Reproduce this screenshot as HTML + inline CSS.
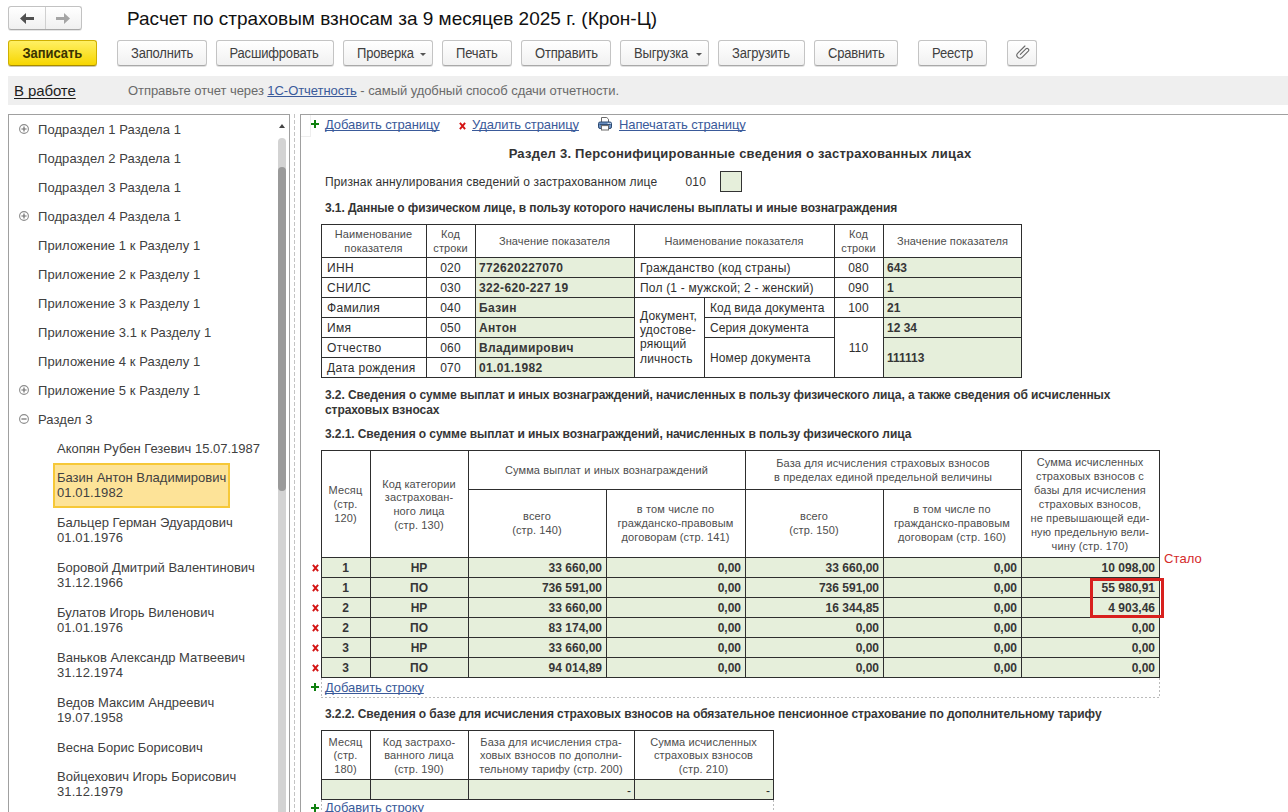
<!DOCTYPE html>
<html><head><meta charset="utf-8"><style>
html,body{margin:0;padding:0;width:1288px;height:812px;overflow:hidden;background:#fff;}
body{position:relative;font-family:"Liberation Sans", sans-serif;}
.t{position:absolute;white-space:nowrap;}
.r{position:absolute;box-sizing:border-box;}
.btn{position:absolute;box-sizing:border-box;height:26px;top:40px;border:1px solid #c4c4c4;border-bottom-color:#a9a9a9;border-radius:3px;background:linear-gradient(#ffffff,#f1f1f1);box-shadow:0 1px 0 rgba(0,0,0,0.12);font-size:13px;color:#404040;text-align:center;line-height:24px;white-space:nowrap;}
a,.lnk{color:#3a5a9a;text-decoration:underline;}
.t{text-decoration-skip-ink:none;}
</style></head><body>
<div class="r" style="left:8px;top:6px;width:74px;height:24px;border:1px solid #c2c2c2;border-bottom-color:#a8a8a8;border-radius:3px;background:linear-gradient(#fff,#f0f0f0);box-shadow:0 1px 0 rgba(0,0,0,0.1);"></div>
<div class="r" style="left:45px;top:7px;width:1px;height:22px;background:#d0d0d0;"></div>
<svg style="position:absolute;left:19px;top:12px" width="16" height="13" viewBox="0 0 16 13"><path d="M1 6.5 L7 1 L7 5 L15 5 L15 8 L7 8 L7 12 Z" fill="#505050"/></svg>
<svg style="position:absolute;left:55px;top:12px" width="16" height="13" viewBox="0 0 16 13"><path d="M15 6.5 L9 1 L9 5 L1 5 L1 8 L9 8 L9 12 Z" fill="#a5a5a5"/></svg>
<div class="t" style="top:6.92px;font-size:19px;line-height:23px;color:#111;left:127px;">Расчет по страховым взносам за 9 месяцев 2025 г. (Крон-Ц)</div>
<div class="btn" style="left:8px;width:89px;background:linear-gradient(#fff064,#f7d600);border-color:#cfb000;border-bottom-color:#a88c00;box-shadow:0 1px 0 rgba(90,70,0,0.3);"></div>
<div class="t" style="top:45.50px;font-size:13px;line-height:16px;color:#3b3300;font-weight:bold;letter-spacing:-0.05px;left:22.5px;transform:scaleY(1.1);transform-origin:0 70%;">Записать</div>
<div class="btn" style="left:117px;width:90px;"></div>
<div class="t" style="top:45.50px;font-size:13px;line-height:16px;color:#404040;letter-spacing:-0.18px;left:131px;transform:scaleY(1.1);transform-origin:0 70%;">Заполнить</div>
<div class="btn" style="left:216px;width:118px;"></div>
<div class="t" style="top:45.50px;font-size:13px;line-height:16px;color:#404040;letter-spacing:-0.18px;left:229.5px;transform:scaleY(1.1);transform-origin:0 70%;">Расшифровать</div>
<div class="btn" style="left:343px;width:90px;"></div>
<div class="t" style="top:45.50px;font-size:13px;line-height:16px;color:#404040;letter-spacing:-0.18px;left:357px;transform:scaleY(1.1);transform-origin:0 70%;">Проверка</div>
<div class="btn" style="left:442px;width:70px;"></div>
<div class="t" style="top:45.50px;font-size:13px;line-height:16px;color:#404040;letter-spacing:-0.18px;left:456px;transform:scaleY(1.1);transform-origin:0 70%;">Печать</div>
<div class="btn" style="left:521px;width:90px;"></div>
<div class="t" style="top:45.50px;font-size:13px;line-height:16px;color:#404040;letter-spacing:-0.18px;left:535px;transform:scaleY(1.1);transform-origin:0 70%;">Отправить</div>
<div class="btn" style="left:620px;width:89px;"></div>
<div class="t" style="top:45.50px;font-size:13px;line-height:16px;color:#404040;letter-spacing:-0.18px;left:634px;transform:scaleY(1.1);transform-origin:0 70%;">Выгрузка</div>
<div class="btn" style="left:718px;width:87px;"></div>
<div class="t" style="top:45.50px;font-size:13px;line-height:16px;color:#404040;letter-spacing:-0.18px;left:732px;transform:scaleY(1.1);transform-origin:0 70%;">Загрузить</div>
<div class="btn" style="left:814px;width:84px;"></div>
<div class="t" style="top:45.50px;font-size:13px;line-height:16px;color:#404040;letter-spacing:-0.18px;left:828px;transform:scaleY(1.1);transform-origin:0 70%;">Сравнить</div>
<div class="btn" style="left:918px;width:69px;"></div>
<div class="t" style="top:45.50px;font-size:13px;line-height:16px;color:#404040;letter-spacing:-0.18px;left:932px;transform:scaleY(1.1);transform-origin:0 70%;">Реестр</div>
<div class="btn" style="left:1007px;width:30px;"></div>
<span style="position:absolute;left:420px;top:53px;width:0;height:0;border-left:3px solid transparent;border-right:3px solid transparent;border-top:3px solid #555"></span>
<span style="position:absolute;left:696px;top:53px;width:0;height:0;border-left:3px solid transparent;border-right:3px solid transparent;border-top:3px solid #555"></span>
<svg style="position:absolute;left:1015.7px;top:45px" width="15" height="15" viewBox="0 0 15 15"><path d="M8.9 1 L1.8 8.1 A3 3 0 0 0 6.1 12.4 L12.3 6.2 A1.7 1.7 0 0 0 9.9 3.8 L4.4 9.3" fill="none" stroke="#6a6a6a" stroke-width="1.15" stroke-linecap="round"/></svg>
<div class="r" style="left:8px;top:76px;width:1280px;height:29px;background:#efefef;"></div>
<div class="t" style="top:82.00px;font-size:15px;line-height:18px;color:#1e1e1e;letter-spacing:-0.1px;left:14px;text-decoration:underline;text-underline-offset:2px;">В работе</div>
<div class="t" style="top:82.50px;font-size:13px;line-height:16px;color:#6a6a6a;letter-spacing:-0.06px;left:128px;">Отправьте отчет через <span class="lnk">1С-Отчетность</span> - самый удобный способ сдачи отчетности.</div>
<div class="r" style="left:8px;top:114px;width:282px;height:720px;border:1px solid #a0a0a0;background:#fff;"></div>
<div class="r" style="left:278px;top:138px;width:8px;height:700px;background:#d3d3d3;border-radius:4px;"></div>
<div class="r" style="left:278px;top:167px;width:8px;height:324px;background:#9a9a9a;border-radius:4px;"></div>
<svg style="position:absolute;left:279px;top:124px" width="6" height="4"><path d="M0 4 L3 0 L6 4 Z" fill="#444"/></svg>
<div class="r" style="left:294px;top:114px;width:1px;height:700px;background:repeating-linear-gradient(180deg,#c4c4c4 0 4px,transparent 4px 6px);"></div>
<svg style="position:absolute;left:19px;top:124px" width="10" height="10" viewBox="0 0 10 10"><circle cx="5" cy="5" r="4.4" fill="none" stroke="#8c8c8c" stroke-width="1.1"/><path d="M2.4 5 H7.6 M5 2.4 V7.6" stroke="#6e6e6e" stroke-width="1.2"/></svg>
<div class="t" style="top:121.50px;font-size:13px;line-height:16px;color:#404040;letter-spacing:0.08px;left:38px;">Подраздел 1 Раздела 1</div>
<div class="t" style="top:150.50px;font-size:13px;line-height:16px;color:#404040;letter-spacing:0.08px;left:38px;">Подраздел 2 Раздела 1</div>
<div class="t" style="top:179.50px;font-size:13px;line-height:16px;color:#404040;letter-spacing:0.08px;left:38px;">Подраздел 3 Раздела 1</div>
<svg style="position:absolute;left:19px;top:211px" width="10" height="10" viewBox="0 0 10 10"><circle cx="5" cy="5" r="4.4" fill="none" stroke="#8c8c8c" stroke-width="1.1"/><path d="M2.4 5 H7.6 M5 2.4 V7.6" stroke="#6e6e6e" stroke-width="1.2"/></svg>
<div class="t" style="top:208.50px;font-size:13px;line-height:16px;color:#404040;letter-spacing:0.08px;left:38px;">Подраздел 4 Раздела 1</div>
<div class="t" style="top:237.50px;font-size:13px;line-height:16px;color:#404040;letter-spacing:0.08px;left:38px;">Приложение 1 к Разделу 1</div>
<div class="t" style="top:266.50px;font-size:13px;line-height:16px;color:#404040;letter-spacing:0.08px;left:38px;">Приложение 2 к Разделу 1</div>
<div class="t" style="top:295.50px;font-size:13px;line-height:16px;color:#404040;letter-spacing:0.08px;left:38px;">Приложение 3 к Разделу 1</div>
<div class="t" style="top:324.50px;font-size:13px;line-height:16px;color:#404040;letter-spacing:0.08px;left:38px;">Приложение 3.1 к Разделу 1</div>
<div class="t" style="top:353.50px;font-size:13px;line-height:16px;color:#404040;letter-spacing:0.08px;left:38px;">Приложение 4 к Разделу 1</div>
<svg style="position:absolute;left:19px;top:385px" width="10" height="10" viewBox="0 0 10 10"><circle cx="5" cy="5" r="4.4" fill="none" stroke="#8c8c8c" stroke-width="1.1"/><path d="M2.4 5 H7.6 M5 2.4 V7.6" stroke="#6e6e6e" stroke-width="1.2"/></svg>
<div class="t" style="top:382.50px;font-size:13px;line-height:16px;color:#404040;letter-spacing:0.08px;left:38px;">Приложение 5 к Разделу 1</div>
<svg style="position:absolute;left:19px;top:414px" width="10" height="10" viewBox="0 0 10 10"><circle cx="5" cy="5" r="4.4" fill="none" stroke="#8c8c8c" stroke-width="1.1"/><path d="M2.4 5 H7.6" stroke="#6e6e6e" stroke-width="1.2"/></svg>
<div class="t" style="top:411.50px;font-size:13px;line-height:16px;color:#404040;letter-spacing:0.08px;left:38px;">Раздел 3</div>
<div class="r" style="left:53px;top:463px;width:177px;height:45px;background:#fde398;border:2px solid #f6c838;"></div>
<div class="t" style="top:440.50px;font-size:13px;line-height:16px;color:#404040;left:57px;">Акопян Рубен Гезевич 15.07.1987</div>
<div class="t" style="top:469.50px;font-size:13px;line-height:16px;color:#404040;left:57px;">Базин Антон Владимирович</div>
<div class="t" style="top:485.20px;font-size:13px;line-height:16px;color:#404040;letter-spacing:0.1px;left:57px;">01.01.1982</div>
<div class="t" style="top:514.50px;font-size:13px;line-height:16px;color:#404040;left:57px;">Бальцер Герман Эдуардович</div>
<div class="t" style="top:530.20px;font-size:13px;line-height:16px;color:#404040;letter-spacing:0.1px;left:57px;">01.01.1976</div>
<div class="t" style="top:559.50px;font-size:13px;line-height:16px;color:#404040;left:57px;">Боровой Дмитрий Валентинович</div>
<div class="t" style="top:575.20px;font-size:13px;line-height:16px;color:#404040;letter-spacing:0.1px;left:57px;">31.12.1966</div>
<div class="t" style="top:604.50px;font-size:13px;line-height:16px;color:#404040;left:57px;">Булатов Игорь Виленович</div>
<div class="t" style="top:620.20px;font-size:13px;line-height:16px;color:#404040;letter-spacing:0.1px;left:57px;">01.01.1976</div>
<div class="t" style="top:649.50px;font-size:13px;line-height:16px;color:#404040;left:57px;">Ваньков Александр Матвеевич</div>
<div class="t" style="top:665.20px;font-size:13px;line-height:16px;color:#404040;letter-spacing:0.1px;left:57px;">31.12.1974</div>
<div class="t" style="top:694.50px;font-size:13px;line-height:16px;color:#404040;left:57px;">Ведов Максим Андреевич</div>
<div class="t" style="top:710.20px;font-size:13px;line-height:16px;color:#404040;letter-spacing:0.1px;left:57px;">19.07.1958</div>
<div class="t" style="top:739.50px;font-size:13px;line-height:16px;color:#404040;left:57px;">Весна Борис Борисович</div>
<div class="t" style="top:768.50px;font-size:13px;line-height:16px;color:#404040;left:57px;">Войцехович Игорь Борисович</div>
<div class="t" style="top:784.20px;font-size:13px;line-height:16px;color:#404040;letter-spacing:0.1px;left:57px;">31.12.1979</div>
<div class="r" style="left:300px;top:114px;width:1000px;height:720px;border-left:1px solid #a0a0a0;border-top:1px solid #a0a0a0;"></div>
<div class="r" style="left:301px;top:115px;width:10px;height:22px;border-right:1px solid #eee;border-bottom:1px solid #eee;"></div>
<svg style="position:absolute;left:310.5px;top:120px" width="8" height="8" viewBox="0 0 8 8"><path d="M0 4 H8 M4 0 V8" stroke="#0f800f" stroke-width="2"/></svg>
<div class="t" style="top:116.50px;font-size:13px;line-height:16px;color:#3a5a9a;letter-spacing:-0.1px;left:325px;text-decoration:underline;">Добавить страницу</div>
<svg style="position:absolute;left:458.8px;top:121.8px" width="7" height="8" viewBox="0 0 7 8"><path d="M0.9 0.9 L6.1 7.1 M6.1 0.9 L0.9 7.1" stroke="#d41414" stroke-width="1.9"/></svg>
<div class="t" style="top:116.50px;font-size:13px;line-height:16px;color:#3a5a9a;letter-spacing:-0.1px;left:472px;text-decoration:underline;">Удалить страницу</div>
<svg style="position:absolute;left:598px;top:117px" width="14" height="14" viewBox="0 0 14 14"><path d="M3.5 5 V0.5 H8.8 L10.5 2.2 V5" fill="#fff" stroke="#6a6a6a"/><rect x="0.5" y="5" width="13" height="6.5" rx="1.6" fill="#6f95c6" stroke="#2b4870"/><path d="M1.5 7.4 H12.5" stroke="#2b4870" stroke-width="1"/><rect x="9.6" y="5.9" width="1.3" height="1.1" fill="#dfe9f5"/><rect x="11.4" y="5.9" width="1.3" height="1.1" fill="#dfe9f5"/><rect x="3.5" y="8.6" width="7" height="4.4" fill="#fff" stroke="#6a6a6a"/></svg>
<div class="t" style="top:116.50px;font-size:13px;line-height:16px;color:#3a5a9a;letter-spacing:-0.1px;left:619px;text-decoration:underline;">Напечатать страницу</div>
<div class="t" style="top:145.50px;font-size:13px;line-height:16px;color:#333;font-weight:bold;letter-spacing:0.23px;left:440px;width:600px;text-align:center;">Раздел 3. Персонифицированные сведения о застрахованных лицах</div>
<div class="t" style="top:175.14px;font-size:12px;line-height:15px;color:#333;letter-spacing:0.14px;left:325px;">Признак аннулирования сведений о застрахованном лице</div>
<div class="t" style="top:175.14px;font-size:12px;line-height:15px;color:#333;letter-spacing:0.2px;left:685.5px;">010</div>
<div class="r" style="left:720px;top:171px;width:22px;height:21px;border:1px solid #333;background:#e6efdb;"></div>
<div class="t" style="top:200.84px;font-size:12px;line-height:15px;color:#333;font-weight:bold;letter-spacing:-0.085px;left:325px;">3.1. Данные о физическом лице, в пользу которого начислены выплаты и иные вознаграждения</div>
<div class="r" style="left:476px;top:258px;width:158px;height:19px;background:#e6efdb;"></div>
<div class="r" style="left:476px;top:278px;width:158px;height:19px;background:#e6efdb;"></div>
<div class="r" style="left:476px;top:298px;width:158px;height:19px;background:#e6efdb;"></div>
<div class="r" style="left:476px;top:318px;width:158px;height:19px;background:#e6efdb;"></div>
<div class="r" style="left:476px;top:338px;width:158px;height:19px;background:#e6efdb;"></div>
<div class="r" style="left:476px;top:358px;width:158px;height:19px;background:#e6efdb;"></div>
<div class="r" style="left:884px;top:258px;width:137px;height:19px;background:#e6efdb;"></div>
<div class="r" style="left:884px;top:278px;width:137px;height:19px;background:#e6efdb;"></div>
<div class="r" style="left:884px;top:298px;width:137px;height:19px;background:#e6efdb;"></div>
<div class="r" style="left:884px;top:318px;width:137px;height:19px;background:#e6efdb;"></div>
<div class="r" style="left:884px;top:338px;width:137px;height:39px;background:#e6efdb;"></div>
<div class="r" style="left:321px;top:224px;width:701px;height:1px;background:#2e2e2e;"></div>
<div class="r" style="left:321px;top:377px;width:701px;height:1px;background:#2e2e2e;"></div>
<div class="r" style="left:321px;top:224px;width:1px;height:154px;background:#2e2e2e;"></div>
<div class="r" style="left:1021px;top:224px;width:1px;height:154px;background:#2e2e2e;"></div>
<div class="r" style="left:426px;top:224px;width:1px;height:154px;background:#2e2e2e;"></div>
<div class="r" style="left:475px;top:224px;width:1px;height:154px;background:#2e2e2e;"></div>
<div class="r" style="left:634px;top:224px;width:1px;height:154px;background:#2e2e2e;"></div>
<div class="r" style="left:834px;top:224px;width:1px;height:154px;background:#2e2e2e;"></div>
<div class="r" style="left:883px;top:224px;width:1px;height:154px;background:#2e2e2e;"></div>
<div class="r" style="left:321px;top:257px;width:701px;height:1px;background:#2e2e2e;"></div>
<div class="r" style="left:321px;top:277px;width:314px;height:1px;background:#2e2e2e;"></div>
<div class="r" style="left:321px;top:297px;width:314px;height:1px;background:#2e2e2e;"></div>
<div class="r" style="left:321px;top:317px;width:314px;height:1px;background:#2e2e2e;"></div>
<div class="r" style="left:321px;top:337px;width:314px;height:1px;background:#2e2e2e;"></div>
<div class="r" style="left:321px;top:357px;width:314px;height:1px;background:#2e2e2e;"></div>
<div class="r" style="left:634px;top:277px;width:388px;height:1px;background:#2e2e2e;"></div>
<div class="r" style="left:634px;top:297px;width:388px;height:1px;background:#2e2e2e;"></div>
<div class="r" style="left:704px;top:317px;width:318px;height:1px;background:#2e2e2e;"></div>
<div class="r" style="left:704px;top:337px;width:180px;height:1px;background:#2e2e2e;"></div>
<div class="r" style="left:883px;top:337px;width:139px;height:1px;background:#2e2e2e;"></div>
<div class="r" style="left:704px;top:297px;width:1px;height:81px;background:#2e2e2e;"></div>
<div class="r" style="left:835px;top:337px;width:48px;height:1px;background:#fff;"></div>
<div class="r" style="left:835px;top:317px;width:48px;height:1px;background:#2e2e2e;"></div>
<div class="t" style="top:227.19px;font-size:11px;line-height:14px;color:#4d4d4d;letter-spacing:0.12px;left:73.5px;width:600px;text-align:center;">Наименование</div>
<div class="t" style="top:240.69px;font-size:11px;line-height:14px;color:#4d4d4d;letter-spacing:0.12px;left:73.5px;width:600px;text-align:center;">показателя</div>
<div class="t" style="top:227.19px;font-size:11px;line-height:14px;color:#4d4d4d;letter-spacing:0.12px;left:150.5px;width:600px;text-align:center;">Код</div>
<div class="t" style="top:240.69px;font-size:11px;line-height:14px;color:#4d4d4d;letter-spacing:0.12px;left:150.5px;width:600px;text-align:center;">строки</div>
<div class="t" style="top:234.19px;font-size:11px;line-height:14px;color:#4d4d4d;letter-spacing:0.12px;left:254.5px;width:600px;text-align:center;">Значение показателя</div>
<div class="t" style="top:234.19px;font-size:11px;line-height:14px;color:#4d4d4d;letter-spacing:0.12px;left:434px;width:600px;text-align:center;">Наименование показателя</div>
<div class="t" style="top:227.19px;font-size:11px;line-height:14px;color:#4d4d4d;letter-spacing:0.12px;left:558.5px;width:600px;text-align:center;">Код</div>
<div class="t" style="top:240.69px;font-size:11px;line-height:14px;color:#4d4d4d;letter-spacing:0.12px;left:558.5px;width:600px;text-align:center;">строки</div>
<div class="t" style="top:234.19px;font-size:11px;line-height:14px;color:#4d4d4d;letter-spacing:0.12px;left:652.5px;width:600px;text-align:center;">Значение показателя</div>
<div class="t" style="top:260.74px;font-size:12px;line-height:15px;color:#2e2e2e;letter-spacing:0.3px;left:327px;">ИНН</div>
<div class="t" style="top:260.74px;font-size:12px;line-height:15px;color:#2e2e2e;letter-spacing:0.2px;left:150.5px;width:600px;text-align:center;">020</div>
<div class="t" style="top:260.74px;font-size:12px;line-height:15px;color:#363636;font-weight:bold;letter-spacing:0.35px;left:479px;">772620227070</div>
<div class="t" style="top:280.74px;font-size:12px;line-height:15px;color:#2e2e2e;letter-spacing:0.3px;left:327px;">СНИЛС</div>
<div class="t" style="top:280.74px;font-size:12px;line-height:15px;color:#2e2e2e;letter-spacing:0.2px;left:150.5px;width:600px;text-align:center;">030</div>
<div class="t" style="top:280.74px;font-size:12px;line-height:15px;color:#363636;font-weight:bold;letter-spacing:0.35px;left:479px;">322-620-227 19</div>
<div class="t" style="top:300.74px;font-size:12px;line-height:15px;color:#2e2e2e;letter-spacing:0.3px;left:327px;">Фамилия</div>
<div class="t" style="top:300.74px;font-size:12px;line-height:15px;color:#2e2e2e;letter-spacing:0.2px;left:150.5px;width:600px;text-align:center;">040</div>
<div class="t" style="top:300.74px;font-size:12px;line-height:15px;color:#363636;font-weight:bold;letter-spacing:0.35px;left:479px;">Базин</div>
<div class="t" style="top:320.74px;font-size:12px;line-height:15px;color:#2e2e2e;letter-spacing:0.3px;left:327px;">Имя</div>
<div class="t" style="top:320.74px;font-size:12px;line-height:15px;color:#2e2e2e;letter-spacing:0.2px;left:150.5px;width:600px;text-align:center;">050</div>
<div class="t" style="top:320.74px;font-size:12px;line-height:15px;color:#363636;font-weight:bold;letter-spacing:0.35px;left:479px;">Антон</div>
<div class="t" style="top:340.74px;font-size:12px;line-height:15px;color:#2e2e2e;letter-spacing:0.3px;left:327px;">Отчество</div>
<div class="t" style="top:340.74px;font-size:12px;line-height:15px;color:#2e2e2e;letter-spacing:0.2px;left:150.5px;width:600px;text-align:center;">060</div>
<div class="t" style="top:340.74px;font-size:12px;line-height:15px;color:#363636;font-weight:bold;letter-spacing:0.35px;left:479px;">Владимирович</div>
<div class="t" style="top:360.74px;font-size:12px;line-height:15px;color:#2e2e2e;letter-spacing:0.3px;left:327px;">Дата рождения</div>
<div class="t" style="top:360.74px;font-size:12px;line-height:15px;color:#2e2e2e;letter-spacing:0.2px;left:150.5px;width:600px;text-align:center;">070</div>
<div class="t" style="top:360.74px;font-size:12px;line-height:15px;color:#363636;font-weight:bold;letter-spacing:0.35px;left:479px;">01.01.1982</div>
<div class="t" style="top:261.14px;font-size:12px;line-height:15px;color:#2e2e2e;letter-spacing:0.22px;left:640px;">Гражданство (код страны)</div>
<div class="t" style="top:261.14px;font-size:12px;line-height:15px;color:#2e2e2e;letter-spacing:0.2px;left:558.5px;width:600px;text-align:center;">080</div>
<div class="t" style="top:261.14px;font-size:12px;line-height:15px;color:#363636;font-weight:bold;left:887px;">643</div>
<div class="t" style="top:281.14px;font-size:12px;line-height:15px;color:#2e2e2e;letter-spacing:0.19px;left:640px;">Пол (1 - мужской; 2 - женский)</div>
<div class="t" style="top:281.14px;font-size:12px;line-height:15px;color:#2e2e2e;letter-spacing:0.2px;left:558.5px;width:600px;text-align:center;">090</div>
<div class="t" style="top:281.14px;font-size:12px;line-height:15px;color:#363636;font-weight:bold;left:887px;">1</div>
<div class="t" style="top:308.54px;font-size:12px;line-height:15px;color:#2e2e2e;letter-spacing:0.2px;left:640px;">Документ,</div>
<div class="t" style="top:322.94px;font-size:12px;line-height:15px;color:#2e2e2e;letter-spacing:0.2px;left:640px;">удостове-</div>
<div class="t" style="top:337.34px;font-size:12px;line-height:15px;color:#2e2e2e;letter-spacing:0.2px;left:640px;">ряющий</div>
<div class="t" style="top:351.74px;font-size:12px;line-height:15px;color:#2e2e2e;letter-spacing:0.2px;left:640px;">личность</div>
<div class="t" style="top:300.64px;font-size:12px;line-height:15px;color:#2e2e2e;letter-spacing:0.12px;left:710px;">Код вида документа</div>
<div class="t" style="top:300.64px;font-size:12px;line-height:15px;color:#2e2e2e;letter-spacing:0.2px;left:558.5px;width:600px;text-align:center;">100</div>
<div class="t" style="top:300.64px;font-size:12px;line-height:15px;color:#363636;font-weight:bold;left:887px;">21</div>
<div class="t" style="top:320.64px;font-size:12px;line-height:15px;color:#2e2e2e;letter-spacing:0.12px;left:710px;">Серия документа</div>
<div class="t" style="top:341.34px;font-size:12px;line-height:15px;color:#2e2e2e;letter-spacing:0.2px;left:558.5px;width:600px;text-align:center;">110</div>
<div class="t" style="top:320.64px;font-size:12px;line-height:15px;color:#363636;font-weight:bold;left:887px;">12 34</div>
<div class="t" style="top:350.64px;font-size:12px;line-height:15px;color:#2e2e2e;letter-spacing:0.12px;left:710px;">Номер документа</div>
<div class="t" style="top:350.64px;font-size:12px;line-height:15px;color:#363636;font-weight:bold;left:887px;">111113</div>
<div class="t" style="top:387.64px;font-size:12px;line-height:15px;color:#363636;font-weight:bold;letter-spacing:-0.085px;left:325px;">3.2. Сведения о сумме выплат и иных вознаграждений, начисленных в пользу физического лица, а также сведения об исчисленных</div>
<div class="t" style="top:402.64px;font-size:12px;line-height:15px;color:#363636;font-weight:bold;letter-spacing:-0.085px;left:325px;">страховых взносах</div>
<div class="t" style="top:426.84px;font-size:12px;line-height:15px;color:#363636;font-weight:bold;letter-spacing:-0.085px;left:325px;">3.2.1. Сведения о сумме выплат и иных вознаграждений, начисленных в пользу физического лица</div>
<div class="r" style="left:322px;top:558px;width:837px;height:19px;background:#e6efdb;"></div>
<div class="r" style="left:322px;top:578px;width:837px;height:19px;background:#e6efdb;"></div>
<div class="r" style="left:322px;top:598px;width:837px;height:19px;background:#e6efdb;"></div>
<div class="r" style="left:322px;top:618px;width:837px;height:19px;background:#e6efdb;"></div>
<div class="r" style="left:322px;top:638px;width:837px;height:19px;background:#e6efdb;"></div>
<div class="r" style="left:322px;top:658px;width:837px;height:19px;background:#e6efdb;"></div>
<div class="r" style="left:321px;top:450px;width:839px;height:1px;background:#2e2e2e;"></div>
<div class="r" style="left:321px;top:557px;width:839px;height:1px;background:#2e2e2e;"></div>
<div class="r" style="left:321px;top:677px;width:839px;height:1px;background:#2e2e2e;"></div>
<div class="r" style="left:321px;top:577px;width:839px;height:1px;background:#2e2e2e;"></div>
<div class="r" style="left:321px;top:597px;width:839px;height:1px;background:#2e2e2e;"></div>
<div class="r" style="left:321px;top:617px;width:839px;height:1px;background:#2e2e2e;"></div>
<div class="r" style="left:321px;top:637px;width:839px;height:1px;background:#2e2e2e;"></div>
<div class="r" style="left:321px;top:657px;width:839px;height:1px;background:#2e2e2e;"></div>
<div class="r" style="left:468px;top:489px;width:554px;height:1px;background:#2e2e2e;"></div>
<div class="r" style="left:321px;top:450px;width:1px;height:228px;background:#2e2e2e;"></div>
<div class="r" style="left:370px;top:450px;width:1px;height:228px;background:#2e2e2e;"></div>
<div class="r" style="left:468px;top:450px;width:1px;height:228px;background:#2e2e2e;"></div>
<div class="r" style="left:606px;top:489px;width:1px;height:189px;background:#2e2e2e;"></div>
<div class="r" style="left:745px;top:450px;width:1px;height:228px;background:#2e2e2e;"></div>
<div class="r" style="left:883px;top:489px;width:1px;height:189px;background:#2e2e2e;"></div>
<div class="r" style="left:1021px;top:450px;width:1px;height:228px;background:#2e2e2e;"></div>
<div class="r" style="left:1159px;top:450px;width:1px;height:228px;background:#2e2e2e;"></div>
<div class="t" style="top:482.69px;font-size:11px;line-height:14px;color:#4d4d4d;letter-spacing:0.12px;left:45.5px;width:600px;text-align:center;">Месяц</div>
<div class="t" style="top:497.09px;font-size:11px;line-height:14px;color:#4d4d4d;letter-spacing:0.12px;left:45.5px;width:600px;text-align:center;">(стр.</div>
<div class="t" style="top:511.49px;font-size:11px;line-height:14px;color:#4d4d4d;letter-spacing:0.12px;left:45.5px;width:600px;text-align:center;">120)</div>
<div class="t" style="top:476.59px;font-size:11px;line-height:14px;color:#4d4d4d;letter-spacing:0.12px;left:119px;width:600px;text-align:center;">Код категории</div>
<div class="t" style="top:490.29px;font-size:11px;line-height:14px;color:#4d4d4d;letter-spacing:0.12px;left:119px;width:600px;text-align:center;">застрахован-</div>
<div class="t" style="top:503.99px;font-size:11px;line-height:14px;color:#4d4d4d;letter-spacing:0.12px;left:119px;width:600px;text-align:center;">ного лица</div>
<div class="t" style="top:517.69px;font-size:11px;line-height:14px;color:#4d4d4d;letter-spacing:0.12px;left:119px;width:600px;text-align:center;">(стр. 130)</div>
<div class="t" style="top:463.19px;font-size:11px;line-height:14px;color:#4d4d4d;letter-spacing:0.12px;left:306.5px;width:600px;text-align:center;">Сумма выплат и иных вознаграждений</div>
<div class="t" style="top:509.19px;font-size:11px;line-height:14px;color:#4d4d4d;letter-spacing:0.12px;left:237px;width:600px;text-align:center;">всего</div>
<div class="t" style="top:523.39px;font-size:11px;line-height:14px;color:#4d4d4d;letter-spacing:0.12px;left:237px;width:600px;text-align:center;">(стр. 140)</div>
<div class="t" style="top:501.79px;font-size:11px;line-height:14px;color:#4d4d4d;letter-spacing:0.12px;left:375.5px;width:600px;text-align:center;">в том числе по</div>
<div class="t" style="top:515.99px;font-size:11px;line-height:14px;color:#4d4d4d;letter-spacing:0.12px;left:375.5px;width:600px;text-align:center;">гражданско-правовым</div>
<div class="t" style="top:530.19px;font-size:11px;line-height:14px;color:#4d4d4d;letter-spacing:0.12px;left:375.5px;width:600px;text-align:center;">договорам (стр. 141)</div>
<div class="t" style="top:455.59px;font-size:11px;line-height:14px;color:#4d4d4d;letter-spacing:0.12px;left:583px;width:600px;text-align:center;">База для исчисления страховых взносов</div>
<div class="t" style="top:469.59px;font-size:11px;line-height:14px;color:#4d4d4d;letter-spacing:0.12px;left:583px;width:600px;text-align:center;">в пределах единой предельной величины</div>
<div class="t" style="top:509.19px;font-size:11px;line-height:14px;color:#4d4d4d;letter-spacing:0.12px;left:514px;width:600px;text-align:center;">всего</div>
<div class="t" style="top:523.39px;font-size:11px;line-height:14px;color:#4d4d4d;letter-spacing:0.12px;left:514px;width:600px;text-align:center;">(стр. 150)</div>
<div class="t" style="top:501.79px;font-size:11px;line-height:14px;color:#4d4d4d;letter-spacing:0.12px;left:652px;width:600px;text-align:center;">в том числе по</div>
<div class="t" style="top:515.99px;font-size:11px;line-height:14px;color:#4d4d4d;letter-spacing:0.12px;left:652px;width:600px;text-align:center;">гражданско-правовым</div>
<div class="t" style="top:530.19px;font-size:11px;line-height:14px;color:#4d4d4d;letter-spacing:0.12px;left:652px;width:600px;text-align:center;">договорам (стр. 160)</div>
<div class="t" style="top:454.69px;font-size:11px;line-height:14px;color:#4d4d4d;letter-spacing:0.12px;left:790px;width:600px;text-align:center;">Сумма исчисленных</div>
<div class="t" style="top:468.69px;font-size:11px;line-height:14px;color:#4d4d4d;letter-spacing:0.12px;left:790px;width:600px;text-align:center;">страховых взносов с</div>
<div class="t" style="top:482.69px;font-size:11px;line-height:14px;color:#4d4d4d;letter-spacing:0.12px;left:790px;width:600px;text-align:center;">базы для исчисления</div>
<div class="t" style="top:496.69px;font-size:11px;line-height:14px;color:#4d4d4d;letter-spacing:0.12px;left:790px;width:600px;text-align:center;">страховых взносов,</div>
<div class="t" style="top:510.69px;font-size:11px;line-height:14px;color:#4d4d4d;letter-spacing:0.12px;left:790px;width:600px;text-align:center;">не превышающей еди-</div>
<div class="t" style="top:524.69px;font-size:11px;line-height:14px;color:#4d4d4d;letter-spacing:0.12px;left:790px;width:600px;text-align:center;">ную предельную вели-</div>
<div class="t" style="top:538.69px;font-size:11px;line-height:14px;color:#4d4d4d;letter-spacing:0.12px;left:790px;width:600px;text-align:center;">чину (стр. 170)</div>
<svg style="position:absolute;left:311.8px;top:563.8px" width="7" height="8" viewBox="0 0 7 8"><path d="M0.9 0.9 L6.1 7.1 M6.1 0.9 L0.9 7.1" stroke="#d41414" stroke-width="1.9"/></svg>
<div class="t" style="top:560.84px;font-size:12px;line-height:15px;color:#363636;font-weight:bold;left:45.5px;width:600px;text-align:center;">1</div>
<div class="t" style="top:560.84px;font-size:12px;line-height:15px;color:#363636;font-weight:bold;left:119px;width:600px;text-align:center;">НР</div>
<div class="t" style="top:560.84px;font-size:12px;line-height:15px;color:#363636;font-weight:bold;left:2px;width:600px;text-align:right;">33 660,00</div>
<div class="t" style="top:560.84px;font-size:12px;line-height:15px;color:#363636;font-weight:bold;left:141px;width:600px;text-align:right;">0,00</div>
<div class="t" style="top:560.84px;font-size:12px;line-height:15px;color:#363636;font-weight:bold;left:279px;width:600px;text-align:right;">33 660,00</div>
<div class="t" style="top:560.84px;font-size:12px;line-height:15px;color:#363636;font-weight:bold;left:417px;width:600px;text-align:right;">0,00</div>
<div class="t" style="top:560.84px;font-size:12px;line-height:15px;color:#363636;font-weight:bold;left:555px;width:600px;text-align:right;">10 098,00</div>
<svg style="position:absolute;left:311.8px;top:583.8px" width="7" height="8" viewBox="0 0 7 8"><path d="M0.9 0.9 L6.1 7.1 M6.1 0.9 L0.9 7.1" stroke="#d41414" stroke-width="1.9"/></svg>
<div class="t" style="top:580.84px;font-size:12px;line-height:15px;color:#363636;font-weight:bold;left:45.5px;width:600px;text-align:center;">1</div>
<div class="t" style="top:580.84px;font-size:12px;line-height:15px;color:#363636;font-weight:bold;left:119px;width:600px;text-align:center;">ПО</div>
<div class="t" style="top:580.84px;font-size:12px;line-height:15px;color:#363636;font-weight:bold;left:2px;width:600px;text-align:right;">736 591,00</div>
<div class="t" style="top:580.84px;font-size:12px;line-height:15px;color:#363636;font-weight:bold;left:141px;width:600px;text-align:right;">0,00</div>
<div class="t" style="top:580.84px;font-size:12px;line-height:15px;color:#363636;font-weight:bold;left:279px;width:600px;text-align:right;">736 591,00</div>
<div class="t" style="top:580.84px;font-size:12px;line-height:15px;color:#363636;font-weight:bold;left:417px;width:600px;text-align:right;">0,00</div>
<div class="t" style="top:580.84px;font-size:12px;line-height:15px;color:#363636;font-weight:bold;left:555px;width:600px;text-align:right;">55 980,91</div>
<svg style="position:absolute;left:311.8px;top:603.8px" width="7" height="8" viewBox="0 0 7 8"><path d="M0.9 0.9 L6.1 7.1 M6.1 0.9 L0.9 7.1" stroke="#d41414" stroke-width="1.9"/></svg>
<div class="t" style="top:600.84px;font-size:12px;line-height:15px;color:#363636;font-weight:bold;left:45.5px;width:600px;text-align:center;">2</div>
<div class="t" style="top:600.84px;font-size:12px;line-height:15px;color:#363636;font-weight:bold;left:119px;width:600px;text-align:center;">НР</div>
<div class="t" style="top:600.84px;font-size:12px;line-height:15px;color:#363636;font-weight:bold;left:2px;width:600px;text-align:right;">33 660,00</div>
<div class="t" style="top:600.84px;font-size:12px;line-height:15px;color:#363636;font-weight:bold;left:141px;width:600px;text-align:right;">0,00</div>
<div class="t" style="top:600.84px;font-size:12px;line-height:15px;color:#363636;font-weight:bold;left:279px;width:600px;text-align:right;">16 344,85</div>
<div class="t" style="top:600.84px;font-size:12px;line-height:15px;color:#363636;font-weight:bold;left:417px;width:600px;text-align:right;">0,00</div>
<div class="t" style="top:600.84px;font-size:12px;line-height:15px;color:#363636;font-weight:bold;left:555px;width:600px;text-align:right;">4 903,46</div>
<svg style="position:absolute;left:311.8px;top:623.8px" width="7" height="8" viewBox="0 0 7 8"><path d="M0.9 0.9 L6.1 7.1 M6.1 0.9 L0.9 7.1" stroke="#d41414" stroke-width="1.9"/></svg>
<div class="t" style="top:620.84px;font-size:12px;line-height:15px;color:#363636;font-weight:bold;left:45.5px;width:600px;text-align:center;">2</div>
<div class="t" style="top:620.84px;font-size:12px;line-height:15px;color:#363636;font-weight:bold;left:119px;width:600px;text-align:center;">ПО</div>
<div class="t" style="top:620.84px;font-size:12px;line-height:15px;color:#363636;font-weight:bold;left:2px;width:600px;text-align:right;">83 174,00</div>
<div class="t" style="top:620.84px;font-size:12px;line-height:15px;color:#363636;font-weight:bold;left:141px;width:600px;text-align:right;">0,00</div>
<div class="t" style="top:620.84px;font-size:12px;line-height:15px;color:#363636;font-weight:bold;left:279px;width:600px;text-align:right;">0,00</div>
<div class="t" style="top:620.84px;font-size:12px;line-height:15px;color:#363636;font-weight:bold;left:417px;width:600px;text-align:right;">0,00</div>
<div class="t" style="top:620.84px;font-size:12px;line-height:15px;color:#363636;font-weight:bold;left:555px;width:600px;text-align:right;">0,00</div>
<svg style="position:absolute;left:311.8px;top:643.8px" width="7" height="8" viewBox="0 0 7 8"><path d="M0.9 0.9 L6.1 7.1 M6.1 0.9 L0.9 7.1" stroke="#d41414" stroke-width="1.9"/></svg>
<div class="t" style="top:640.84px;font-size:12px;line-height:15px;color:#363636;font-weight:bold;left:45.5px;width:600px;text-align:center;">3</div>
<div class="t" style="top:640.84px;font-size:12px;line-height:15px;color:#363636;font-weight:bold;left:119px;width:600px;text-align:center;">НР</div>
<div class="t" style="top:640.84px;font-size:12px;line-height:15px;color:#363636;font-weight:bold;left:2px;width:600px;text-align:right;">33 660,00</div>
<div class="t" style="top:640.84px;font-size:12px;line-height:15px;color:#363636;font-weight:bold;left:141px;width:600px;text-align:right;">0,00</div>
<div class="t" style="top:640.84px;font-size:12px;line-height:15px;color:#363636;font-weight:bold;left:279px;width:600px;text-align:right;">0,00</div>
<div class="t" style="top:640.84px;font-size:12px;line-height:15px;color:#363636;font-weight:bold;left:417px;width:600px;text-align:right;">0,00</div>
<div class="t" style="top:640.84px;font-size:12px;line-height:15px;color:#363636;font-weight:bold;left:555px;width:600px;text-align:right;">0,00</div>
<svg style="position:absolute;left:311.8px;top:663.8px" width="7" height="8" viewBox="0 0 7 8"><path d="M0.9 0.9 L6.1 7.1 M6.1 0.9 L0.9 7.1" stroke="#d41414" stroke-width="1.9"/></svg>
<div class="t" style="top:660.84px;font-size:12px;line-height:15px;color:#363636;font-weight:bold;left:45.5px;width:600px;text-align:center;">3</div>
<div class="t" style="top:660.84px;font-size:12px;line-height:15px;color:#363636;font-weight:bold;left:119px;width:600px;text-align:center;">ПО</div>
<div class="t" style="top:660.84px;font-size:12px;line-height:15px;color:#363636;font-weight:bold;left:2px;width:600px;text-align:right;">94 014,89</div>
<div class="t" style="top:660.84px;font-size:12px;line-height:15px;color:#363636;font-weight:bold;left:141px;width:600px;text-align:right;">0,00</div>
<div class="t" style="top:660.84px;font-size:12px;line-height:15px;color:#363636;font-weight:bold;left:279px;width:600px;text-align:right;">0,00</div>
<div class="t" style="top:660.84px;font-size:12px;line-height:15px;color:#363636;font-weight:bold;left:417px;width:600px;text-align:right;">0,00</div>
<div class="t" style="top:660.84px;font-size:12px;line-height:15px;color:#363636;font-weight:bold;left:555px;width:600px;text-align:right;">0,00</div>
<div class="r" style="left:1090px;top:578px;width:74px;height:40px;border:3px solid #d8211e;"></div>
<div class="t" style="top:550.50px;font-size:13px;line-height:16px;color:#d42a2a;letter-spacing:0.1px;left:1164px;">Стало</div>
<div class="r" style="left:321px;top:697px;width:839px;height:1px;background:repeating-linear-gradient(90deg,#bbb 0 2px,transparent 2px 4px);"></div>
<div class="r" style="left:321px;top:678px;width:1px;height:20px;background:repeating-linear-gradient(180deg,#bbb 0 2px,transparent 2px 4px);"></div>
<div class="r" style="left:1159px;top:678px;width:1px;height:20px;background:repeating-linear-gradient(180deg,#bbb 0 2px,transparent 2px 4px);"></div>
<svg style="position:absolute;left:310.5px;top:683px" width="8" height="8" viewBox="0 0 8 8"><path d="M0 4 H8 M4 0 V8" stroke="#0f800f" stroke-width="2"/></svg>
<div class="t" style="top:680.00px;font-size:13px;line-height:16px;color:#3a5a9a;letter-spacing:-0.1px;left:325px;text-decoration:underline;">Добавить строку</div>
<div class="t" style="top:706.64px;font-size:12px;line-height:15px;color:#363636;font-weight:bold;letter-spacing:-0.085px;left:325px;">3.2.2. Сведения о базе для исчисления страховых взносов на обязательное пенсионное страхование по дополнительному тарифу</div>
<div class="r" style="left:322px;top:780px;width:451px;height:19px;background:#e6efdb;"></div>
<div class="r" style="left:321px;top:730px;width:453px;height:1px;background:#2e2e2e;"></div>
<div class="r" style="left:321px;top:779px;width:453px;height:1px;background:#2e2e2e;"></div>
<div class="r" style="left:321px;top:799px;width:453px;height:1px;background:#2e2e2e;"></div>
<div class="r" style="left:321px;top:730px;width:1px;height:70px;background:#2e2e2e;"></div>
<div class="r" style="left:370px;top:730px;width:1px;height:70px;background:#2e2e2e;"></div>
<div class="r" style="left:468px;top:730px;width:1px;height:70px;background:#2e2e2e;"></div>
<div class="r" style="left:634px;top:730px;width:1px;height:70px;background:#2e2e2e;"></div>
<div class="r" style="left:773px;top:730px;width:1px;height:70px;background:#2e2e2e;"></div>
<div class="t" style="top:734.79px;font-size:11px;line-height:14px;color:#4d4d4d;letter-spacing:0.12px;left:45.5px;width:600px;text-align:center;">Месяц</div>
<div class="t" style="top:748.39px;font-size:11px;line-height:14px;color:#4d4d4d;letter-spacing:0.12px;left:45.5px;width:600px;text-align:center;">(стр.</div>
<div class="t" style="top:761.99px;font-size:11px;line-height:14px;color:#4d4d4d;letter-spacing:0.12px;left:45.5px;width:600px;text-align:center;">180)</div>
<div class="t" style="top:734.79px;font-size:11px;line-height:14px;color:#4d4d4d;letter-spacing:0.12px;left:119px;width:600px;text-align:center;">Код застрахо-</div>
<div class="t" style="top:748.39px;font-size:11px;line-height:14px;color:#4d4d4d;letter-spacing:0.12px;left:119px;width:600px;text-align:center;">ванного лица</div>
<div class="t" style="top:761.99px;font-size:11px;line-height:14px;color:#4d4d4d;letter-spacing:0.12px;left:119px;width:600px;text-align:center;">(стр. 190)</div>
<div class="t" style="top:734.79px;font-size:11px;line-height:14px;color:#4d4d4d;letter-spacing:0.12px;left:251px;width:600px;text-align:center;">База для исчисления стра-</div>
<div class="t" style="top:748.39px;font-size:11px;line-height:14px;color:#4d4d4d;letter-spacing:0.12px;left:251px;width:600px;text-align:center;">ховых взносов по дополни-</div>
<div class="t" style="top:761.99px;font-size:11px;line-height:14px;color:#4d4d4d;letter-spacing:0.12px;left:251px;width:600px;text-align:center;">тельному тарифу (стр. 200)</div>
<div class="t" style="top:734.79px;font-size:11px;line-height:14px;color:#4d4d4d;letter-spacing:0.12px;left:403.5px;width:600px;text-align:center;">Сумма исчисленных</div>
<div class="t" style="top:748.39px;font-size:11px;line-height:14px;color:#4d4d4d;letter-spacing:0.12px;left:403.5px;width:600px;text-align:center;">страховых взносов</div>
<div class="t" style="top:761.99px;font-size:11px;line-height:14px;color:#4d4d4d;letter-spacing:0.12px;left:403.5px;width:600px;text-align:center;">(стр. 210)</div>
<div class="t" style="top:784.34px;font-size:12px;line-height:15px;color:#2e2e2e;left:31px;width:600px;text-align:right;">-</div>
<div class="t" style="top:784.34px;font-size:12px;line-height:15px;color:#2e2e2e;left:170px;width:600px;text-align:right;">-</div>
<div class="r" style="left:321px;top:800px;width:1px;height:13px;background:repeating-linear-gradient(180deg,#bbb 0 2px,transparent 2px 4px);"></div>
<div class="r" style="left:773px;top:800px;width:1px;height:13px;background:repeating-linear-gradient(180deg,#bbb 0 2px,transparent 2px 4px);"></div>
<svg style="position:absolute;left:310.5px;top:804px" width="8" height="8" viewBox="0 0 8 8"><path d="M0 4 H8 M4 0 V8" stroke="#0f800f" stroke-width="2"/></svg>
<div class="t" style="top:799.50px;font-size:13px;line-height:16px;color:#3a5a9a;letter-spacing:-0.1px;left:325px;text-decoration:underline;">Добавить строку</div>
</body></html>
